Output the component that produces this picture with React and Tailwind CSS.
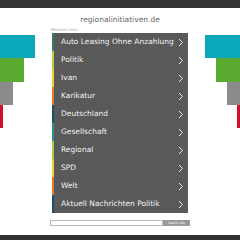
const links = [
  { label: "Auto Leasing Ohne Anzahlung", bar: "bg-[#2f7f6f]" },
  { label: "Politik", bar: "bg-[#b4d334]" },
  { label: "Ivan", bar: "bg-[#efcf2f]" },
  { label: "Karikatur", bar: "bg-[#e6782a]" },
  { label: "Deutschland", bar: "bg-[#1d4e6e]" },
  { label: "Gesellschaft", bar: "bg-[#2f8f8a]" },
  { label: "Regional", bar: "bg-[#a6cc3c]" },
  { label: "SPD", bar: "bg-[#efcf2f]" },
  { label: "Welt", bar: "bg-[#e6782a]" },
  { label: "Aktuell Nachrichten Politik", bar: "bg-[#1d4e6e]" },
];

const Chevron = () => (
  <svg width="6" height="9" viewBox="0 0 6 9" fill="none">
    <path d="M1 1l3.5 3.5L1 8" stroke="#e8e8e8" strokeWidth="1" />
  </svg>
);

const Bars = ({ right }) => (
  <div className={`flex flex-col pt-[27px] ${right ? "items-end" : "items-start"}`}>
    <div className="w-[35px] h-[23px] bg-[#0aa8b8]" />
    <div className="w-[24px] h-[24px] bg-[#5aab2f]" />
    <div className="w-[13px] h-[23px] bg-[#8b8b8b]" />
    <div className="w-[3px] h-[23px] bg-[#d3102c]" />
  </div>
);

export default function App() {
  return (
    <div className="w-[240px] h-[240px] bg-white flex flex-col overflow-hidden" style={{ fontFamily: "'DejaVu Sans', sans-serif" }}>
      <div className="h-[8px] bg-[#333333] shrink-0" />
      <div className="flex flex-1">
        <div className="w-[52px]"><Bars /></div>
        <div className="w-[136px] flex flex-col">
          <div className="h-[15px] flex items-end justify-center text-[7.5px] leading-none text-[#666]">
            regionalinitiativen.de
          </div>
          <div className="h-[9px] flex items-end text-[4px] leading-none text-[#aaa] -ml-[1px]">
            Related Links
          </div>
          <div className="mt-[1px] bg-[#595959]">
            {links.map((l) => (
              <div key={l.label} className="flex items-center h-[18px]">
                <div className={`w-[2px] h-full ${l.bar}`} />
                <span className="ml-[7px] flex-1 text-[7.5px] leading-none text-[#f2f2f2]">{l.label}</span>
                <div className="mr-[4px] flex"><Chevron /></div>
              </div>
            ))}
          </div>
          <div className="mt-[7px] -mx-[2px] flex h-[6px]">
            <div className="flex-1 border border-[#bbb] bg-white" />
            <div className="w-[27px] bg-[#9a9a9a] text-[3px] text-white flex items-center justify-center leading-none">Search Ads</div>
          </div>
        </div>
        <div className="w-[52px]"><Bars right /></div>
      </div>
      <div className="h-[5px] bg-[#333333] shrink-0" />
    </div>
  );
}
